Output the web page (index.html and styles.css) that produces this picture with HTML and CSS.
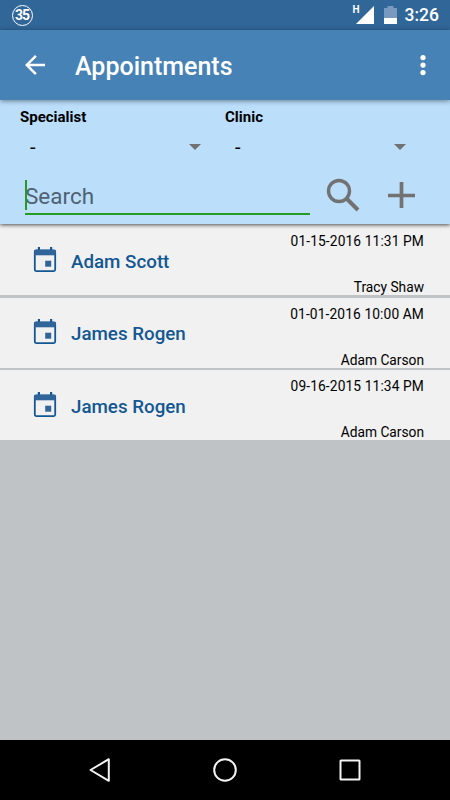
FILE: index.html
```html
<!DOCTYPE html>
<html lang="en">
<head>
  <meta charset="UTF-8">
  <meta name="viewport" content="width=device-width, initial-scale=1.0">
  <title>Appointments</title>
  <link rel="stylesheet" href="styles.css">
</head>
<body>
  <div class="status-bar">
    <div class="badge">35</div>
    <div class="status-icons">
      <span class="network">H</span>
      <svg class="signal" width="18" height="18" viewBox="0 0 18 18"><path d="M18 0v18H0z" fill="#fff"/></svg>
      <svg class="battery" width="13" height="18" viewBox="0 0 13 18">
        <path d="M3.500 0h6v2H13v10H0V2h3.500z" fill="#7a99be"/>
        <path d="M0 12h13v6H0z" fill="#fff"/>
      </svg>
      <span class="clock">3:26</span>
    </div>
  </div>

  <div class="top-bar">
    <svg width="30" height="30" viewBox="0 0 24 24"><path d="M20 11H7.830l5.590-5.590L12 4l-8 8 8 8 1.410-1.410L7.830 13H20v-2z" fill="#fff"/></svg>
    <h1>Appointments</h1>
    <svg width="30" height="30" viewBox="0 0 24 24" fill="#fff"><circle cx="12" cy="6" r="2.100"/><circle cx="12" cy="12" r="2.100"/><circle cx="12" cy="18" r="2.100"/></svg>
  </div>

  <div class="filters">
    <div class="selects">
      <div class="select">
        <label>Specialist</label>
        <div class="value"><span>-</span><i class="caret"></i></div>
      </div>
      <div class="select">
        <label>Clinic</label>
        <div class="value"><span>-</span><i class="caret"></i></div>
      </div>
    </div>
    <div class="search-row">
      <div class="search"><div class="cursor"></div><span>Search</span></div>
      <svg width="34" height="34" viewBox="0 0 34 34" fill="none" stroke="#727272"><circle cx="13" cy="13" r="10.500" stroke-width="3.400"/><path d="M21 21L32 32" stroke-width="4"/></svg>
      <svg class="add" width="28" height="28" viewBox="0 0 28 28" fill="none" stroke="#727272" stroke-width="3.700"><path d="M14.500 1v26M1 14.500h27"/></svg>
    </div>
  </div>

  <div class="list">
    <div class="row">
      <svg class="calendar" width="24" height="26" viewBox="0 0 24 26"><use href="#calendar"/></svg>
      <div class="name">Adam Scott</div>
      <div class="info"><span class="date">01-15-2016 11:31 PM</span><span>Tracy Shaw</span></div>
    </div>
    <div class="row">
      <svg class="calendar" width="24" height="26" viewBox="0 0 24 26"><use href="#calendar"/></svg>
      <div class="name">James Rogen</div>
      <div class="info"><span class="date">01-01-2016 10:00 AM</span><span>Adam Carson</span></div>
    </div>
    <div class="row">
      <svg class="calendar" width="24" height="26" viewBox="0 0 24 26"><use href="#calendar"/></svg>
      <div class="name">James Rogen</div>
      <div class="info"><span class="date">09-16-2015 11:34 PM</span><span>Adam Carson</span></div>
    </div>
  </div>

  <div class="bottom-nav">
    <svg width="26" height="26" viewBox="0 0 26 26"><path d="M21.800 2.200v21.600L3.500 13z"/></svg>
    <svg width="26" height="26" viewBox="0 0 26 26"><circle cx="13" cy="13" r="10.800"/></svg>
    <svg width="26" height="26" viewBox="0 0 26 26"><rect x="3.500" y="3.500" width="19" height="19" rx="0.500"/></svg>
  </div>

  <svg width="0" height="0" class="defs">
    <symbol id="calendar" viewBox="0 0 24 26">
      <path d="M4.800 0H7v5H4.800zM17 0h2.200v5H17z" fill="#135793"/>
      <rect x="1.800" y="3.300" width="20.400" height="20.800" rx="1.500" fill="none" stroke="#135793" stroke-width="1.800"/>
      <path d="M1.500 2.800h21v5.500h-21z" fill="#30659a"/>
      <path d="M12.200 13.700h6v6h-6z" fill="#30659a"/>
    </symbol>
  </svg>
</body>
</html>
```

FILE: styles.css
```css
* { margin: 0; padding: 0; box-sizing: border-box; }
html, body {
  width: 450px;
  height: 800px;
  overflow: hidden;
}
body {
  display: flex;
  flex-direction: column;
  background: #bfc3c6;
  color: #000;
  font-family: Roboto, sans-serif;
}
svg { display: block; flex: none; }
.defs { position: absolute; }
.status-bar {
  height: 30px;
  flex: none;
  background: #316698;
  color: #fff;
  display: flex;
  justify-content: space-between;
  padding: 0 10px 0 12px;
}
.badge {
  width: 21px;
  height: 21px;
  margin-top: 5px;
  border: 1.5px solid #fff;
  border-radius: 50%;
  font-size: 14px;
  font-weight: 700;
  line-height: 19px;
  letter-spacing: -1px;
  text-indent: -1px;
  text-align: center;
}
.status-icons { display: flex; }
.network {
  font-size: 10px;
  font-weight: 700;
  line-height: 12px;
  margin: 4px -4px 0 0;
}
.signal { margin: 6px 10px 0 0; }
.battery { margin: 6px 8px 0 0; }
.clock {
  font-size: 17.5px;
  font-weight: 500;
  line-height: 31px;
  margin-right: 1px;
}
.top-bar {
  height: 70px;
  flex: none;
  background: #4682b5;
  color: #fff;
  display: flex;
  align-items: center;
  padding: 0 12.5px 0 20px;
  position: relative;
  z-index: 2;
  box-shadow: 0 1px 5px rgba(0, 0, 0, 0.45);
}
.top-bar h1 {
  flex: 1;
  padding: 3px 0 0 25px;
  font-size: 25px;
  font-weight: 500;
  line-height: 30px;
}
.filters {
  height: 124px;
  flex: none;
  background: #bbdefb;
  padding: 8px 20px 0;
  position: relative;
  z-index: 1;
  box-shadow: 0 1px 4px rgba(0, 0, 0, 0.7);
}
.selects { display: flex; }
.select { width: 205px; }
.select label {
  display: block;
  font-size: 15px;
  font-weight: 700;
  line-height: 19px;
}
.value {
  display: flex;
  justify-content: space-between;
  align-items: center;
  height: 40px;
  padding: 0 24px 0 10px;
  font-size: 20px;
}
.caret {
  border: 6px solid transparent;
  border-top-color: #727272;
  border-bottom: 0;
}
.search-row { display: flex; }
.search {
  width: 285px;
  height: 36px;
  margin: 12px 16px 0 5px;
  border-bottom: 2px solid #259b24;
  color: #4f6272;
  font-size: 22.5px;
  line-height: 34px;
  position: relative;
}
.cursor {
  position: absolute;
  left: 0;
  top: 1px;
  width: 2px;
  height: 30px;
  background: #259b24;
}
.search-row > svg { margin-top: 11px; }
.search-row > .add { margin: 14px 0 0 27px; }
.list {
  display: flex;
  flex-direction: column;
  gap: 2.5px;
  border-top: 1px solid #f1f1f1;
}
.row {
  height: 70px;
  display: flex;
  align-items: flex-start;
  padding: 0 26px 0 33px;
  background: #f1f1f1;
}
.calendar { margin-top: 21.5px; }
.name {
  flex: 1;
  margin: 25.5px 0 0 14px;
  color: #135793;
  font-size: 18.75px;
  font-weight: 500;
  line-height: 22px;
}
.info {
  height: 70px;
  padding-top: 8px;
  display: flex;
  flex-direction: column;
  justify-content: space-between;
  text-align: right;
  font-size: 13.75px;
  line-height: 16px;
}
.date { letter-spacing: 0.12px; }
.bottom-nav {
  height: 60px;
  flex: none;
  margin-top: auto;
  background: #000;
  display: flex;
  justify-content: space-between;
  align-items: center;
  padding: 0 87px;
}
.bottom-nav svg {
  fill: none;
  stroke: #f4f4f4;
  stroke-width: 2;
  stroke-linejoin: round;
}
```
